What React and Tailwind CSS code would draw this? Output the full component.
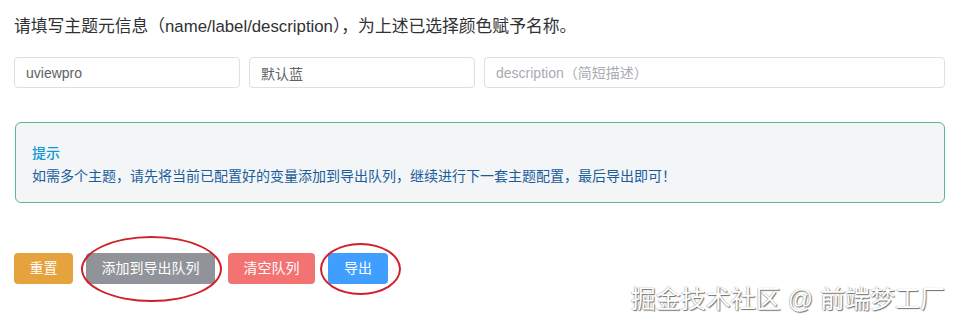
import React from "react";

const font = { fontFamily: '"Liberation Sans", "Noto Sans CJK SC", sans-serif' };

const Field = ({ value, placeholder, className }) => (
  <input
    readOnly
    value={value}
    placeholder={placeholder}
    className={`h-[31px] rounded-[4px] border border-[#dcdfe6] bg-white px-[11px] text-[14px] text-[#606266] placeholder:text-[#a8abb2] outline-none ${className}`}
  />
);

const Btn = ({ children, className }) => (
  <button className={`h-[31px] rounded-[4px] text-[14px] text-white ${className}`}>
    {children}
  </button>
);

export default function App() {
  return (
    <div className="relative w-[957px] h-[322px] overflow-hidden bg-white pl-[14px] pr-[12px]" style={font}>
      <p className="pt-[17px] text-[16.8px] leading-[20px] text-[#303133]">
        请填写主题元信息（name/label/description），为上述已选择颜色赋予名称。
      </p>

      <div className="mt-[20px] flex gap-[9px]">
        <Field value="uviewpro" className="w-[226px]" />
        <Field value="默认蓝" className="w-[226px]" />
        <Field value="" placeholder="description（简短描述）" className="flex-1" />
      </div>

      <div className="mt-[34px] ml-[1px] h-[81px] rounded-[6px] border border-[#5cb89a] bg-[#f3f5f7] px-[16px] pt-[20px]">
        <div className="text-[14px] leading-[20px] font-medium text-[#1298d6]">提示</div>
        <div className="mt-[3px] text-[14px] leading-[20px] text-[#1a5d9b]">
          如需多个主题，请先将当前已配置好的变量添加到导出队列，继续进行下一套主题配置，最后导出即可！
        </div>
      </div>

      <div className="mt-[50px] flex gap-[13px]">
        <Btn className="w-[59px] bg-[#e6a23c]">重置</Btn>
        <div className="relative">
          <Btn className="w-[129px] bg-[#909399]">添加到导出队列</Btn>
          <div className="pointer-events-none absolute left-[-5px] top-[-17px] h-[66px] w-[141px] rounded-[50%] border-2 border-[#d0202a]" />
        </div>
        <Btn className="w-[87px] bg-[#f37272]">清空队列</Btn>
        <div className="relative">
          <Btn className="w-[60px] bg-[#409eff]">导出</Btn>
          <div className="pointer-events-none absolute left-[-8px] top-[-10px] h-[52px] w-[81px] rounded-[50%] border-2 border-[#d0202a]" />
        </div>
      </div>

      <div
        className="absolute right-[12px] bottom-[9px] text-[25px] leading-[28px] text-white"
        style={{ textShadow: "1px 1px 1px rgba(0,0,0,0.55), -0.5px -0.5px 1px rgba(0,0,0,0.35)" }}
      >
        掘金技术社区 @ 前端梦工厂
      </div>
    </div>
  );
}
